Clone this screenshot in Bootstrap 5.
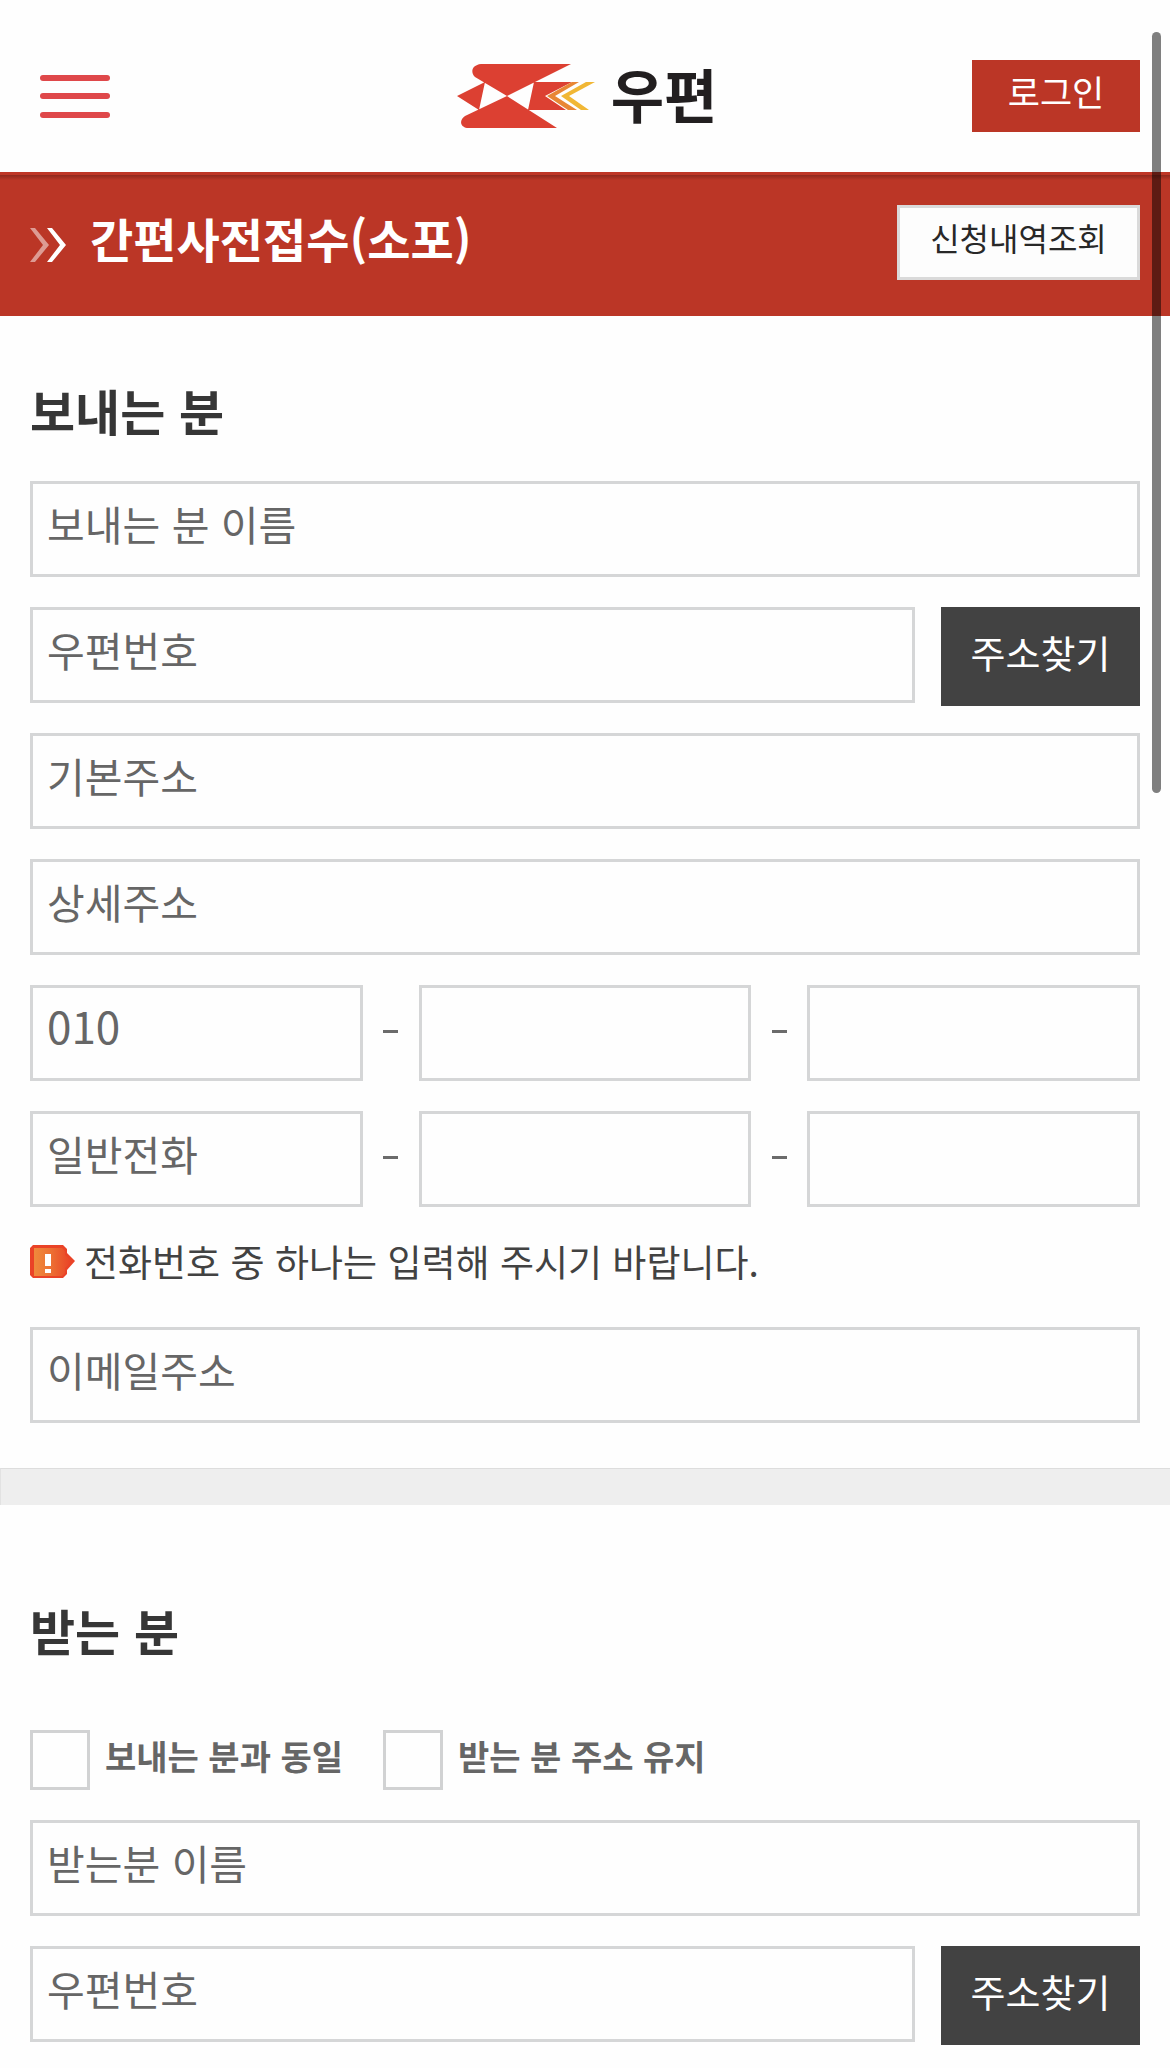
<!DOCTYPE html>
<html lang="ko">
<head>
<meta charset="utf-8">
<meta name="viewport" content="width=device-width, initial-scale=1">
<title>간편사전접수(소포)</title>
<link href="https://cdn.jsdelivr.net/npm/bootstrap@5.3.0/dist/css/bootstrap.min.css" rel="stylesheet">
<style>
body{font-family:"Noto Sans CJK KR","Noto Sans",sans-serif;background:#fefefe;color:#363636;overflow-x:hidden}
.site-head{height:172px;padding:20px 30px 0 40px}
.menu-btn{line-height:0}
.brand-link{margin-right:6px}
.brand-name{font-size:58px;font-weight:700;line-height:66px;padding-bottom:6px;color:#221f20}
.flat-btn{border:0;border-radius:0;line-height:56px;padding:3px 0 13px;white-space:nowrap}
.login-btn{width:168px;background:#bb3626;color:#fff;font-size:35px}
.title-band{height:144px;padding:0 30px 3px;background:linear-gradient(#bf3626 0 3px,#8f291d 3px,#bb3626 8px)}
.band-title{font-size:47px;font-weight:700;line-height:60px;color:#fff;padding-bottom:10px}
.history-btn{width:243px;border:3px solid #dadada;background:#fdfdfd;color:#282828;font-size:32px;padding:1px 0 12px}
.login-btn:hover,.find-btn:hover{background:#333;color:#fff}
.form-part{padding:64px 30px 45px}
.form-part + .divider + .form-part{padding-top:95px;padding-bottom:23px}
.part-title{font-size:49px;font-weight:700;line-height:60px;margin:0 0 41px}
.receiver-title{margin-bottom:70px}
.stack{display:flex;flex-direction:column;gap:30px}
.field{height:96px;border:3px solid #d5d6d7;border-radius:0;padding:0 14px 12px;font-size:41px;color:#666;background:#fefefe;min-width:0}
.field::placeholder{color:#666;opacity:1}
.prefix{font-size:44px;padding-bottom:16px}
.find-btn{width:199px;height:99px;margin-bottom:-3px;background:#424242;color:#fff;font-size:38px;flex:none}
.zip-row{height:96px;gap:26px}
.dash{width:56px;flex:none;display:flex;justify-content:center;padding-bottom:4px}
.dash::before{content:"";width:15px;height:3px;background:#6b6b6b}
.notice{font-size:37px;line-height:48px;padding-bottom:12px;gap:9px;color:#424242}
.tick{appearance:none;width:60px;height:60px;border:3px solid #d1d2d3;background:#fefefe;margin:0;flex:none}
.tick:checked{background:#bb3626}
.tick-label{font-size:34px;font-weight:700;line-height:52px;padding-bottom:8px;color:#666}
.tick-row{gap:40px}
.tick-pair{gap:15px}
.divider{height:37px;background:#eee;border-top:1px solid #ddd;border-left:1px solid #e2e2e2}
.scroll-thumb{position:absolute;top:32px;right:9px;width:9px;height:761px;border-radius:5px;background:rgba(0,0,0,.5)}
</style>
</head>
<body>
<header class="site-head d-flex align-items-center">
  <div class="flex-fill w-25">
    <button class="menu-btn btn p-0 border-0" type="button" aria-label="메뉴">
      <svg width="70" height="43" viewBox="0 0 70 43" fill="#df484a"><rect width="70" height="6" rx="3"/><rect y="18" width="70" height="6" rx="3"/><rect y="37" width="70" height="6" rx="3"/></svg>
    </button>
  </div>
  <a class="brand-link d-flex align-items-center text-decoration-none gap-3" href="#">
    <svg width="138" height="66" viewBox="0 0 138 66">
      <path fill="#dc4032" d="M24 1H114L50 33L18 14C13 9 15 2 24 1ZM50 33L100 65H10C3 64 2 57 8 53ZM0 33L28 19L22 47ZM77 19H115L88 33L109 47H71Z"/>
      <path fill="#e88634" d="M115 19H122L98 33L120 47H111L90 33Z"/>
      <path fill="#f1b735" d="M129 19H138L112 33L132 47H124L104 33Z"/>
    </svg>
    <span class="brand-name">우편</span>
  </a>
  <div class="flex-fill w-25 d-flex justify-content-end"><button class="btn flat-btn login-btn" type="button">로그인</button></div>
</header>
<section class="title-band d-flex align-items-center justify-content-between">
  <div class="d-flex align-items-center gap-4">
    <svg class="mt-1" width="36" height="34" viewBox="0 0 36 34"><path fill="#dd9b93" d="M0 0H5L19 17L5 34H0L13 17Z"/><path fill="#fff" d="M17 0H22L36 17L22 34H17L30 17Z"/></svg>
    <h1 class="band-title m-0">간편사전접수(소포)</h1>
  </div>
  <button class="btn flat-btn history-btn" type="button">신청내역조회</button>
</section>
<main>
  <form class="form-part">
    <h2 class="part-title">보내는 분</h2>
    <div class="stack">
      <input class="form-control field" type="text" placeholder="보내는 분 이름" aria-label="보내는 분 이름">
      <div class="zip-row d-flex">
        <input class="form-control field" type="text" placeholder="우편번호" aria-label="우편번호">
        <button class="btn flat-btn find-btn" type="button">주소찾기</button>
      </div>
      <input class="form-control field" type="text" placeholder="기본주소" aria-label="기본주소">
      <input class="form-control field" type="text" placeholder="상세주소" aria-label="상세주소">
      <div class="d-flex align-items-center">
        <input class="form-control field prefix" type="tel" value="010" aria-label="휴대전화 앞자리"><span class="dash"></span>
        <input class="form-control field" type="tel" aria-label="휴대전화 가운데자리"><span class="dash"></span>
        <input class="form-control field" type="tel" aria-label="휴대전화 끝자리">
      </div>
      <div class="d-flex align-items-center">
        <input class="form-control field" type="tel" placeholder="일반전화" aria-label="일반전화"><span class="dash"></span>
        <input class="form-control field" type="tel" aria-label="일반전화 가운데자리"><span class="dash"></span>
        <input class="form-control field" type="tel" aria-label="일반전화 끝자리">
      </div>
      <p class="notice d-flex align-items-center m-0">
        <svg class="flex-shrink-0" width="45" height="33" viewBox="0 0 45 33"><defs><linearGradient id="tag"><stop stop-color="#ef8a3c"/><stop offset=".4" stop-color="#ed7434"/><stop offset="1" stop-color="#e94026"/></linearGradient></defs><path fill="#ea4327" d="M3 0H33L37 4V8L45 16L37 25V29L33 33H3L0 30V3Z"/><path fill="url(#tag)" d="M4 3H32L35 6V10L42 16L35 23V28L32 31H4Z"/><path fill="#fff" d="M15 9H21V21H15ZM15 24H21V28H15Z"/></svg>
        <span>전화번호 중 하나는 입력해 주시기 바랍니다.</span>
      </p>
      <input class="form-control field" type="email" placeholder="이메일주소" aria-label="이메일주소">
    </div>
  </form>
  <div class="divider"></div>
  <form class="form-part">
    <h2 class="part-title receiver-title">받는 분</h2>
    <div class="stack">
      <div class="tick-row d-flex">
        <div class="tick-pair d-flex"><input class="tick" type="checkbox" id="same"><label class="tick-label" for="same">보내는 분과 동일</label></div>
        <div class="tick-pair d-flex"><input class="tick" type="checkbox" id="keep"><label class="tick-label" for="keep">받는 분 주소 유지</label></div>
      </div>
      <input class="form-control field" type="text" placeholder="받는분 이름" aria-label="받는분 이름">
      <div class="zip-row d-flex">
        <input class="form-control field" type="text" placeholder="우편번호" aria-label="받는 분 우편번호">
        <button class="btn flat-btn find-btn" type="button">주소찾기</button>
      </div>
    </div>
  </form>
</main>
<div class="scroll-thumb"></div>
<script src="https://cdn.jsdelivr.net/npm/bootstrap@5.3.0/dist/js/bootstrap.bundle.min.js"></script>
</body>
</html>
